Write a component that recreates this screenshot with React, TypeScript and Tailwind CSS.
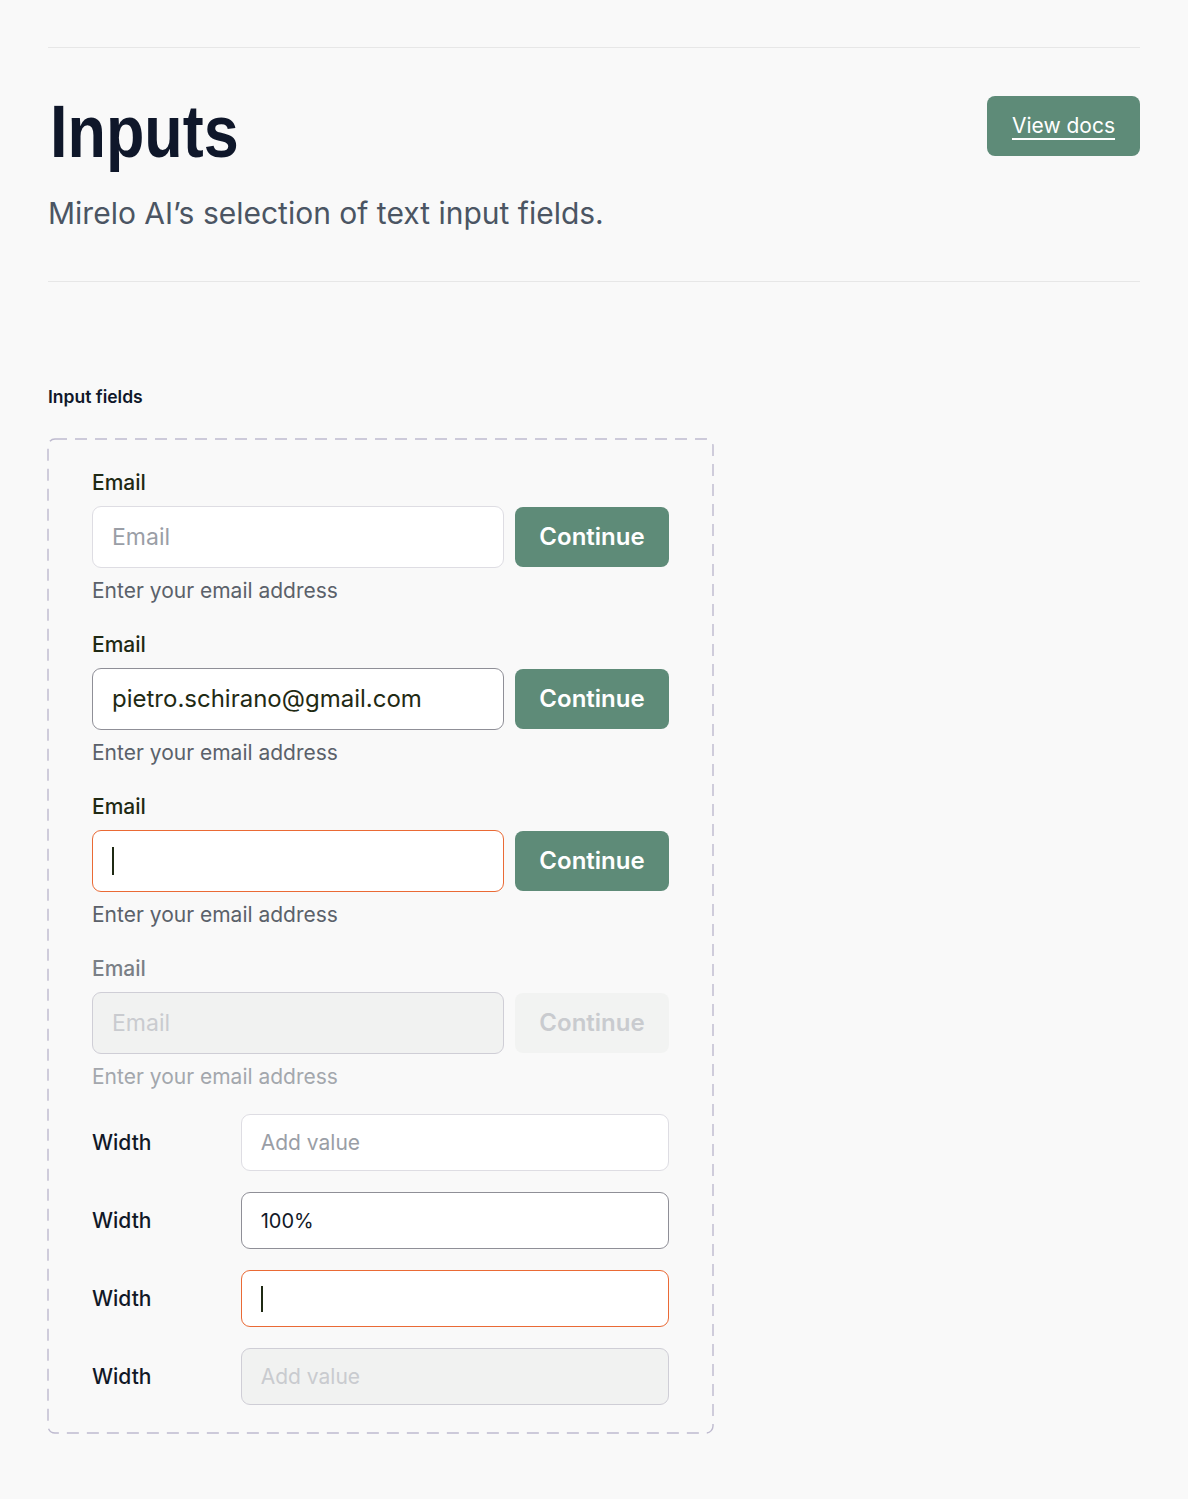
import React from 'react';

type FieldState = 'empty' | 'filled' | 'focus' | 'disabled';

const boxStyles = (state: FieldState) => {
  if (state === 'filled') return 'bg-white border-[#8f8f97]';
  if (state === 'focus') return 'bg-white border-[#ea6a35]';
  if (state === 'disabled') return 'bg-[#f1f2f1] border-[#cfced6]';
  return 'bg-white border-[#dedde3]';
};

const EmailField: React.FC<{ state: FieldState }> = ({ state }) => {
  const disabled = state === 'disabled';

  return (
    <div className="flex flex-col">
      <label className={`text-[21px] font-medium leading-[24px] ${disabled ? 'text-[#7a7f86]' : 'text-[#1f2a14]'}`}>
        Email
      </label>
      <div className="mt-[11px] flex items-center gap-[11px]">
        <div className={`w-[412px] h-[62px] rounded-[9px] border flex items-center px-[19px] ${boxStyles(state)}`}>
          {state === 'empty' && <span className="text-[23px] text-[#9a9ea6]">Email</span>}
          {state === 'filled' && <span className="text-[24px] text-[#1f2a14]">pietro.schirano@gmail.com</span>}
          {state === 'focus' && <span className="inline-block w-[2px] h-[28px] bg-[#1f2a14]" />}
          {state === 'disabled' && <span className="text-[23px] text-[#c9cbcf]">Email</span>}
        </div>
        <button
          className={`w-[154px] h-[60px] rounded-[8px] text-[24px] font-semibold ${
            disabled ? 'bg-[#f2f3f2] text-[#c9cbcf]' : 'bg-[#5e8b78] text-white'
          }`}
        >
          Continue
        </button>
      </div>
      <p className={`mt-[10px] text-[21px] leading-[26px] ${disabled ? 'text-[#a3a7ad]' : 'text-[#5b616a]'}`}>
        Enter your email address
      </p>
    </div>
  );
};

const WidthRow: React.FC<{ state: FieldState }> = ({ state }) => (
  <div className="flex items-center">
    <span className="w-[149px] text-[21px] font-medium text-[#111827]">Width</span>
    <div className={`w-[429px] h-[57px] rounded-[9px] border flex items-center px-[19px] text-[21px] ${boxStyles(state)}`}>
      {state === 'empty' && <span className="text-[#9a9ea6]">Add value</span>}
      {state === 'filled' && <span className="text-[20px] text-[#111827]">100%</span>}
      {state === 'focus' && <span className="inline-block w-[2px] h-[26px] bg-[#1f2a14]" />}
      {state === 'disabled' && <span className="text-[#c9cbcf]">Add value</span>}
    </div>
  </div>
);

const App: React.FC = () => {
  return (
    <div className="min-h-[1499px] bg-[#f9f9f9] px-[48px] pt-[47px] font-['Inter',sans-serif]">
      <div className="border-t border-[#e7e7e7]" />

      {/* Header */}
      <div className="flex items-start justify-between pt-[48px]">
        <div>
          <h1 className="inline-block origin-left scale-x-[0.85] -mt-[1px] ml-[2px] font-['Liberation_Sans',sans-serif] font-bold text-[74px] leading-[74px] text-[#0f172a]">
            Inputs
          </h1>
          <p className="mt-[25px] text-[30px] leading-[38px] text-[#4b5563]">
            Mirelo AI’s selection of text input fields.
          </p>
        </div>
        <button className="w-[153px] h-[60px] rounded-[8px] bg-[#5e8b78] text-white text-[21px] underline underline-offset-[5px] decoration-[1.5px]">
          View docs
        </button>
      </div>

      <div className="mt-[49px] border-t border-[#e7e7e7]" />

      {/* Section */}
      <h2 className="mt-[103px] text-[17.5px] font-semibold leading-[24px] text-[#0f172a]">Input fields</h2>

      <div className="relative mt-[30px] w-[665px] px-[44px] pt-[32px] pb-[28px]">
        <svg className="absolute inset-0 w-full h-full overflow-visible pointer-events-none" xmlns="http://www.w3.org/2000/svg">
          <rect
            width="100%"
            height="100%"
            rx="7"
            fill="none"
            stroke="#bebacf"
            strokeWidth="1.4"
            strokeDasharray="12 8"
          />
        </svg>

        <div className="flex flex-col gap-[29px]">
          <EmailField state="empty" />
          <EmailField state="filled" />
          <EmailField state="focus" />
          <EmailField state="disabled" />
        </div>

        <div className="mt-[24px] flex flex-col gap-[21px]">
          <WidthRow state="empty" />
          <WidthRow state="filled" />
          <WidthRow state="focus" />
          <WidthRow state="disabled" />
        </div>
      </div>
    </div>
  );
};

export default App;
